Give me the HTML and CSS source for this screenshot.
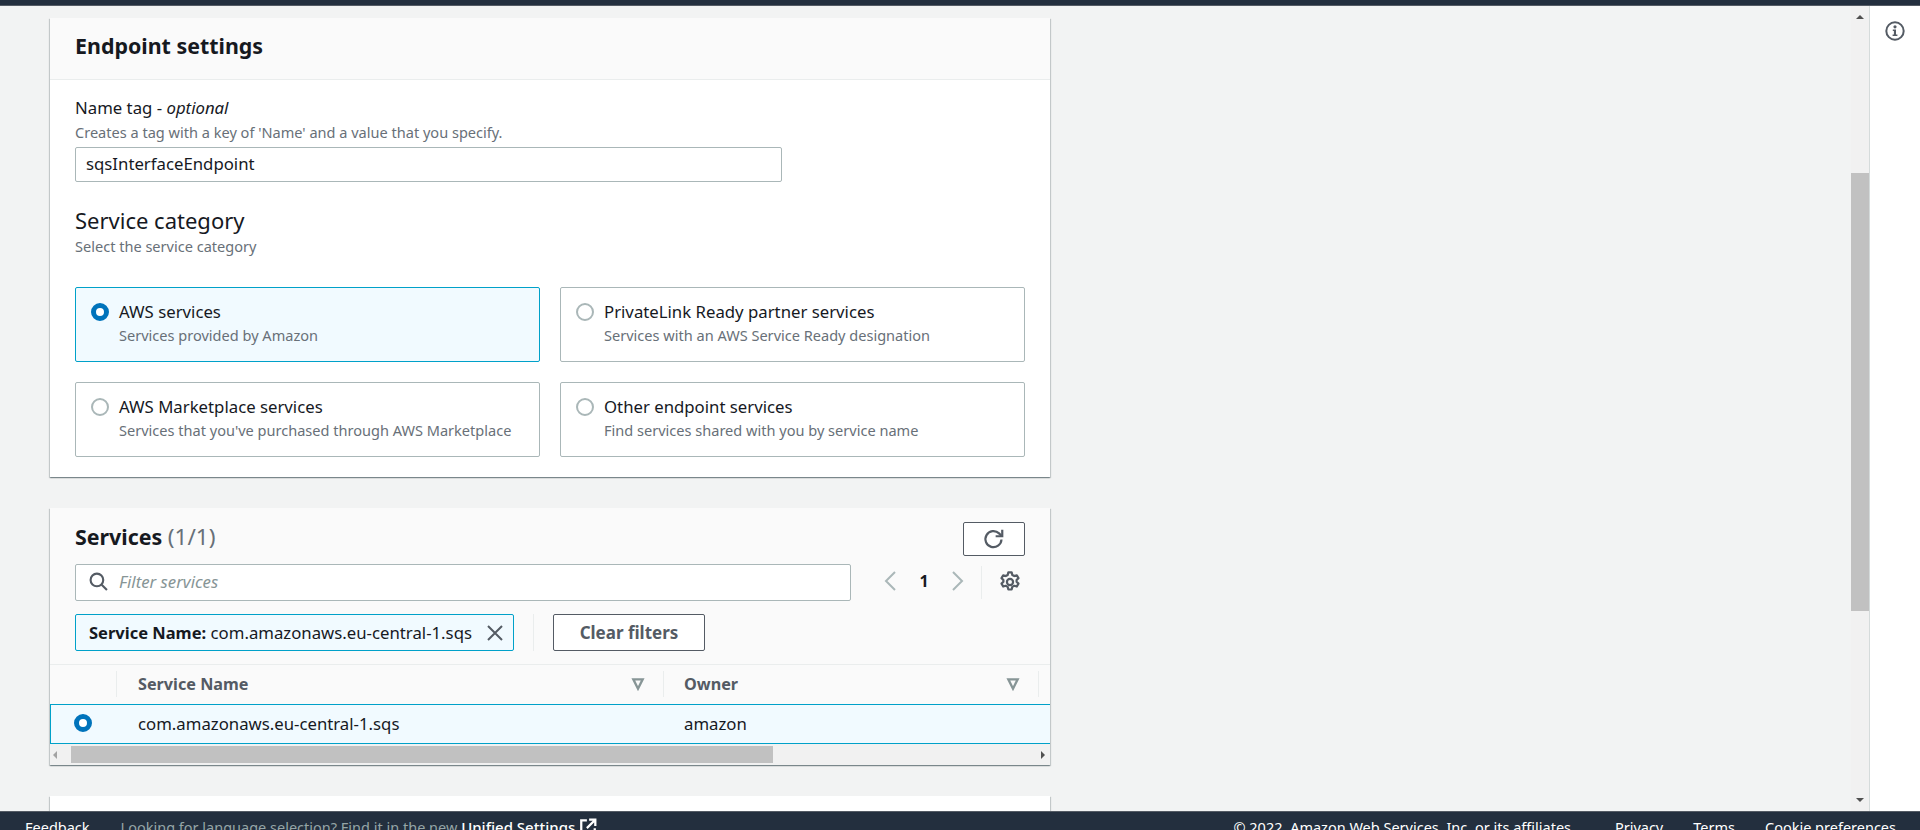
FILE: index.html
```html
<!DOCTYPE html>
<html>
<head>
    <title>Create endpoint</title>
    <link rel="stylesheet" href="styles.css">
</head>
<body>
    <div class="topbar"></div>

    <div class="middle">
        <div class="main">
            <div class="card settings-card">
                <div class="card-header">
                    <h2>Endpoint settings</h2>
                </div>
                <div class="card-body">
                    <div class="field-label">Name tag - <i>optional</i></div>
                    <div class="field-desc">Creates a tag with a key of 'Name' and a value that you specify.</div>
                    <div class="text-input">sqsInterfaceEndpoint</div>

                    <h3>Service category</h3>
                    <div class="field-desc">Select the service category</div>

                    <div class="tiles">
                        <div class="tile selected">
                            <span class="radio on"></span>
                            <div>
                                <div class="tile-title">AWS services</div>
                                <div class="tile-desc">Services provided by Amazon</div>
                            </div>
                        </div>
                        <div class="tile">
                            <span class="radio"></span>
                            <div>
                                <div class="tile-title">PrivateLink Ready partner services</div>
                                <div class="tile-desc">Services with an AWS Service Ready designation</div>
                            </div>
                        </div>
                        <div class="tile">
                            <span class="radio"></span>
                            <div>
                                <div class="tile-title">AWS Marketplace services</div>
                                <div class="tile-desc">Services that you've purchased through AWS Marketplace</div>
                            </div>
                        </div>
                        <div class="tile">
                            <span class="radio"></span>
                            <div>
                                <div class="tile-title">Other endpoint services</div>
                                <div class="tile-desc">Find services shared with you by service name</div>
                            </div>
                        </div>
                    </div>
                </div>
            </div>

            <div class="card services-card">
                <div class="services-header">
                    <div class="title-row">
                        <h2>Services <span class="count">(1/1)</span></h2>
                        <button class="refresh-btn">
                            <svg width="22" height="22" viewBox="0 0 20 20" fill="none" stroke="#545b64" stroke-width="2">
                                <path d="M16.800 10.500a7.300 7.300 0 1 1-2.200-5.600l2.400 2.400"/>
                                <path d="M17.500 1.500v6h-6"/>
                            </svg>
                        </button>
                    </div>
                    <div class="filter-row">
                        <div class="filter-input">
                            <svg width="19" height="19" viewBox="0 0 18 18" fill="none" stroke="#545b64" stroke-width="2">
                                <circle cx="7.500" cy="7.500" r="6"/>
                                <path d="M12 12l5 5"/>
                            </svg>
                            <span>Filter services</span>
                        </div>
                        <div class="pager">
                            <svg width="14" height="22" viewBox="0 0 14 22" fill="none" stroke="#aab7b8" stroke-width="2"><path d="M12 2L3 11l9 9"/></svg>
                            <span class="page-num">1</span>
                            <svg width="14" height="22" viewBox="0 0 14 22" fill="none" stroke="#aab7b8" stroke-width="2"><path d="M2 2l9 9-9 9"/></svg>
                        </div>
                        <div class="pager-settings">
                            <svg width="22" height="22" viewBox="0 0 20 20" fill="none" stroke="#545b64" stroke-width="2" stroke-linejoin="round">
                                <circle cx="10" cy="10" r="2.800"/>
                                <path d="M8.500 1.200h3l.6 2.400 1.800 1 2.300-.7 1.500 2.600-1.700 1.700v1.600l1.700 1.700-1.500 2.600-2.300-.7-1.800 1-.6 2.400h-3l-.6-2.400-1.800-1-2.300.7-1.500-2.600 1.700-1.700V8.200L2.300 6.500l1.500-2.600 2.300.7 1.800-1z"/>
                            </svg>
                        </div>
                    </div>
                    <div class="token-row">
                        <div class="token">
                            <span><b>Service Name:</b> com.amazonaws.eu-central-1.sqs</span>
                            <svg width="18" height="18" viewBox="0 0 18 18" fill="none" stroke="#545b64" stroke-width="2"><path d="M2 2l14 14M16 2L2 16"/></svg>
                        </div>
                        <div class="token-sep"></div>
                        <button class="clear-btn">Clear filters</button>
                    </div>
                </div>

                <div class="table-head">
                    <div class="head-cell first"></div>
                    <div class="head-cell name-col">
                        <span>Service Name</span>
                        <svg class="sort" width="14" height="14" viewBox="0 0 12 12" fill="none" stroke="#879596" stroke-width="2"><path d="M2 2h8l-4 8z"/></svg>
                    </div>
                    <div class="head-cell owner-col">
                        <span>Owner</span>
                        <svg class="sort" width="14" height="14" viewBox="0 0 12 12" fill="none" stroke="#879596" stroke-width="2"><path d="M2 2h8l-4 8z"/></svg>
                    </div>
                </div>
                <div class="table-row">
                    <div class="row-radio"><span class="radio on"></span></div>
                    <div class="row-name">com.amazonaws.eu-central-1.sqs</div>
                    <div class="row-owner">amazon</div>
                </div>
                <div class="h-scroll">
                    <span class="arrow-left"></span>
                    <div class="h-thumb"></div>
                    <span class="arrow-right"></span>
                </div>
            </div>

            <div class="card next-card"></div>
        </div>

        <div class="v-scroll">
            <span class="arrow-up"></span>
            <div class="v-thumb"></div>
            <span class="arrow-down"></span>
        </div>

        <div class="tools">
            <svg width="20" height="20" viewBox="0 0 20 20" fill="none">
                <circle cx="10" cy="10" r="8.700" stroke="#545b64" stroke-width="2"/>
                <circle cx="10" cy="5.800" r="1.600" fill="#545b64"/>
                <path d="M7.800 8.600h3.200v5h1.400v1.400H7.600v-1.400h1.300V10H7.800z" fill="#545b64"/>
            </svg>
        </div>
    </div>

    <div class="footer">
        <div class="footer-left">
            <span class="feedback">Feedback</span>
            <span class="lang">Looking for language selection? Find it in the new <b>Unified Settings</b></span>
            <svg width="18" height="18" viewBox="0 0 16 16" fill="none" stroke="#fff" stroke-width="2"><path d="M7 2H2v12h12V9"/><path d="M9 1.500h5.500V7M14 2L7 9"/></svg>
        </div>
        <div class="footer-right">
            <span class="copyright">© 2022, Amazon Web Services, Inc. or its affiliates.</span>
            <span>Privacy</span>
            <span>Terms</span>
            <span>Cookie preferences</span>
        </div>
    </div>
</body>
</html>
```

FILE: styles.css
```css
* {
    box-sizing: border-box;
}

html, body {
    margin: 0;
    height: 830px;
    overflow: hidden;
}

body {
    font-family: "Noto Sans", sans-serif;
    font-size: 16.75px;
    color: #16191f;
    background: #f2f3f3;
}

.topbar {
    height: 6px;
    background: #232f3e;
    border-bottom: 1px solid #545b64;
}

.middle {
    display: flex;
    height: 805px;
}

.main {
    flex: 1;
    padding: 12px 0 0 50px;
    overflow: hidden;
}

.card {
    width: 1000px;
    background: white;
    box-shadow: 0 1px 1px 0 rgba(0, 28, 36, 0.3), 1px 1px 1px 0 rgba(0, 28, 36, 0.15), -1px 1px 1px 0 rgba(0, 28, 36, 0.15);
}

.card-header {
    height: 62px;
    padding: 17px 25px;
    background: #fafafa;
    border-bottom: 1px solid #eaeded;
}

h2 {
    margin: 0;
    font-size: 21.400px;
    line-height: 22px;
    font-weight: 700;
}

h3 {
    margin: 25px 0 0;
    font-size: 22px;
    line-height: 26px;
    font-weight: 400;
}

.card-body {
    padding: 17px 25px 20px;
}

.field-label {
    line-height: 22px;
}

.field-desc {
    margin-top: 4px;
    font-size: 14.550px;
    line-height: 18px;
    color: #687078;
}

.text-input {
    width: 707px;
    height: 35px;
    margin-top: 6px;
    padding: 0 10px;
    line-height: 31px;
    background: white;
    border: 1px solid #aab7b8;
    border-radius: 2px;
}

.tiles {
    display: grid;
    grid-template-columns: 465px 465px;
    grid-auto-rows: 75px;
    gap: 20px;
    margin-top: 32px;
}

.tile {
    display: flex;
    gap: 10px;
    padding: 13px 15px;
    border: 1px solid #aab7b8;
    border-radius: 2px;
}

.tile.selected {
    background: #f1faff;
    border-color: #00a1c9;
}

.tile-title {
    line-height: 22px;
}

.tile-desc {
    margin-top: 3px;
    font-size: 14.550px;
    line-height: 18px;
    color: #687078;
}

.radio {
    flex: none;
    display: block;
    width: 18px;
    height: 18px;
    margin-top: 2px;
    background: white;
    border: 2px solid #aab7b8;
    border-radius: 50%;
}

.radio.on {
    border: 5px solid #0073bb;
}

.services-card {
    margin-top: 31px;
}

.services-header {
    height: 157px;
    padding: 14px 25px 0;
    background: #fafafa;
    border-bottom: 1px solid #eaeded;
}

.title-row {
    display: flex;
    justify-content: space-between;
    height: 34px;
}

.title-row h2 {
    margin-top: 4px;
}

.count {
    font-size: 22.500px;
    font-weight: 400;
    color: #687078;
}

button {
    font-family: inherit;
    background: white;
    border: 1px solid #545b64;
    border-radius: 2px;
    padding: 0;
}

.refresh-btn {
    display: flex;
    align-items: center;
    justify-content: center;
    width: 62px;
    height: 34px;
}

.filter-row {
    display: flex;
    align-items: center;
    height: 37px;
    margin-top: 8px;
}

.filter-input {
    display: flex;
    align-items: center;
    gap: 11px;
    width: 776px;
    height: 37px;
    padding: 0 0 2px 13px;
    background: white;
    border: 1px solid #aab7b8;
    border-radius: 2px;
    font-style: italic;
    color: #879596;
}

.pager {
    display: flex;
    align-items: center;
    justify-content: space-between;
    width: 82px;
    margin-left: 32px;
    padding-bottom: 3px;
}

.page-num {
    font-size: 16px;
    font-weight: 700;
}

.pager-settings {
    display: flex;
    align-items: center;
    height: 33px;
    margin-left: 16px;
    padding-left: 17px;
    padding-bottom: 2px;
    border-left: 1px solid #eaeded;
}

.token-row {
    display: flex;
    height: 37px;
    margin-top: 13px;
}

.token {
    display: flex;
    align-items: center;
    justify-content: space-between;
    width: 439px;
    padding: 0 9px 0 13px;
    background: #f1faff;
    border: 1px solid #00a1c9;
    border-radius: 2px;
}

.token b {
    font-size: 16.500px;
}

.token-sep {
    width: 1px;
    margin: 0 19px;
    background: #eaeded;
}

.clear-btn {
    width: 152px;
    font-size: 17px;
    font-weight: 700;
    color: #545b64;
}

.table-head {
    display: flex;
    height: 39px;
    padding-top: 6px;
    background: #fafafa;
}

.head-cell {
    height: 26px;
    line-height: 23px;
    font-size: 16.200px;
    font-weight: 700;
    color: #545b64;
}

.head-cell.first {
    width: 66px;
}

.name-col, .owner-col {
    display: flex;
    align-items: center;
    justify-content: space-between;
    padding: 0 18px 0 21px;
    border-left: 1px solid #eaeded;
}

.name-col {
    width: 547px;
}

.owner-col {
    width: 376px;
    padding-left: 20px;
    border-right: 1px solid #eaeded;
}

.table-row {
    display: flex;
    align-items: center;
    height: 40px;
    padding-bottom: 2px;
    background: #f1faff;
    border: 1px solid #00a1c9;
    border-width: 1px 0 1px 1px;
}

.row-radio {
    width: 66px;
    padding-left: 23px;
}

.row-radio .radio {
    margin: 0;
}

.row-name {
    width: 546px;
    padding-left: 21px;
}

.row-owner {
    padding-left: 21px;
}

.h-scroll {
    display: flex;
    align-items: center;
    height: 21px;
    padding: 0 3px;
    background: #f1f1f1;
}

.h-thumb {
    width: 702px;
    height: 17px;
    margin-left: 14px;
    background: #c1c1c1;
}

.arrow-left {
    width: 0;
    height: 0;
    border-top: 4px solid transparent;
    border-bottom: 4px solid transparent;
    border-right: 4px solid #a3a3a3;
}

.arrow-right {
    width: 0;
    height: 0;
    margin-left: auto;
    margin-right: 2px;
    border-top: 4px solid transparent;
    border-bottom: 4px solid transparent;
    border-left: 4px solid #505050;
}

.next-card {
    height: 60px;
    margin-top: 31px;
}

.v-scroll {
    display: flex;
    flex-direction: column;
    align-items: center;
    width: 18px;
    padding: 9px 0;
    background: #f1f1f1;
}

.v-thumb {
    width: 100%;
    height: 438px;
    margin-top: 154px;
    background: #c1c1c1;
}

.arrow-up {
    width: 0;
    height: 0;
    border-left: 4px solid transparent;
    border-right: 4px solid transparent;
    border-bottom: 4px solid #505050;
}

.arrow-down {
    width: 0;
    height: 0;
    margin-top: auto;
    border-left: 4px solid transparent;
    border-right: 4px solid transparent;
    border-top: 4px solid #505050;
}

.tools {
    display: flex;
    justify-content: center;
    width: 51px;
    padding-top: 15px;
    background: white;
    border-left: 1px solid #d5dbdb;
}

.footer {
    display: flex;
    align-items: center;
    justify-content: space-between;
    height: 30px;
    padding: 0 24px 0 25px;
    font-size: 14.500px;
    color: #d5dbdb;
    background: #232f3e;
    border-top: 1px solid #545b64;
}

.footer-left {
    display: flex;
    align-items: center;
}

.footer-left b {
    font-size: 15px;
    font-weight: 500;
    color: white;
}

.feedback {
    color: white;
    margin-right: 31px;
}

.lang {
    margin-right: 4px;
    color: #95a5a6;
}

.footer-right {
    display: flex;
    color: white;
}

.copyright {
    margin-right: 10px;
}

.footer-right span + span {
    margin-left: 30px;
}
```
